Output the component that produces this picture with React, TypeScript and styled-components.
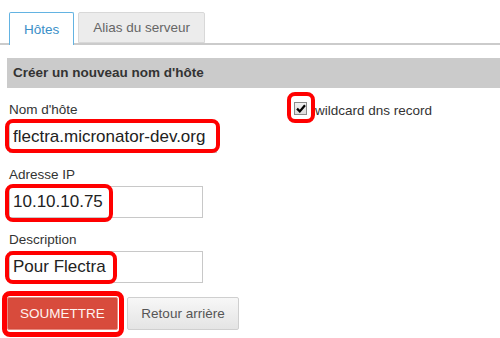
import React from 'react';
import styled, { createGlobalStyle } from 'styled-components';

const GlobalStyle = createGlobalStyle`
  body {
    margin: 0;
    background: #fff;
    font-family: 'Liberation Sans', Arial, sans-serif;
    color: #333;
  }
`;

const Page = styled.div`
  position: relative;
  width: 500px;
  height: 338px;
  overflow: hidden;
`;

const TabBar = styled.div`
  display: flex;
  gap: 4px;
  padding: 12px 0 0 9px;
  border-bottom: 2px solid #cbcbcb;
  height: 31px;
`;

const Tab = styled.div<{ $active?: boolean }>`
  box-sizing: border-box;
  height: ${p => (p.$active ? '33px' : '31px')};
  padding: 0 14px;
  display: flex;
  align-items: center;
  font-size: 13.5px;
  border: 1px solid ${p => (p.$active ? '#63b3e2' : '#d8d8d8')};
  border-bottom: ${p => (p.$active ? 'none' : '1px solid #d8d8d8')};
  border-radius: 2px 2px 0 0;
  background: ${p => (p.$active ? '#fff' : '#ececec')};
  color: ${p => (p.$active ? '#3b8fc8' : '#666')};
`;

const SectionTitle = styled.div`
  margin: 13px 0 0 7px;
  height: 30px;
  line-height: 30px;
  padding-left: 6px;
  background: #cbcbcb;
  font-size: 13.5px;
  font-weight: bold;
  color: #333;
`;

const Form = styled.div`
  padding-left: 9px;
`;

const TopRow = styled.div`
  display: grid;
  grid-template-columns: 285px auto;
`;

const Field = styled.div`
  display: flex;
  flex-direction: column;
  align-items: flex-start;
`;

const Label = styled.label`
  margin-top: 14px;
  height: 16px;
  line-height: 16px;
  margin-bottom: 3px;
  font-size: 13.5px;
  color: #333;
`;

const Input = styled.input<{ $width?: number }>`
  box-sizing: border-box;
  width: ${p => p.$width ?? 194}px;
  height: 32px;
  border: 1px solid #c8c8c8;
  padding: 0 3px;
  font-family: 'Liberation Sans', Arial, sans-serif;
  font-size: 17px;
  color: #222;
  background: #fff;
  outline: none;
`;

const CheckField = styled.label`
  display: flex;
  align-items: center;
  gap: 8px;
  margin-top: 14px;
  height: 16px;
  font-size: 13.5px;
  color: #333;
`;

const CheckBox = styled.span`
  box-sizing: border-box;
  width: 13px;
  height: 13px;
  border: 1px solid #8a8a8a;
  background: linear-gradient(#f2f2f2, #dcdcdc);
  display: flex;
  align-items: center;
  justify-content: center;
  margin-top: -3px;
`;

const Actions = styled.div`
  display: flex;
  gap: 9px;
  margin: 14px 0 0 -2px;
`;

const Button = styled.button<{ $primary?: boolean }>`
  box-sizing: border-box;
  height: 33px;
  padding: 0;
  white-space: nowrap;
  font-family: 'Liberation Sans', Arial, sans-serif;
  font-size: 13.5px;
  border-radius: 2px;
  border: 1px solid ${p => (p.$primary ? '#e88b80' : '#cfcfcf')};
  box-shadow: ${p => (p.$primary ? 'inset 0 0 0 1px #d4493a' : 'none')};
  background: ${p => (p.$primary ? '#d84b3c' : 'linear-gradient(#f7f7f7, #e4e4e4)')};
  color: ${p => (p.$primary ? '#fff3f0' : '#555')};
  width: ${p => (p.$primary ? '111px' : '112px')};
`;

const Highlight = styled.div<{ $x: number; $y: number; $w: number; $h: number; $t?: number }>`
  position: absolute;
  box-sizing: border-box;
  left: ${p => p.$x}px;
  top: ${p => p.$y}px;
  width: ${p => p.$w}px;
  height: ${p => p.$h}px;
  border: ${p => p.$t ?? 4}px solid #f00;
  border-radius: 8px;
  pointer-events: none;
`;

const App = () => {
  return (
    <>
      <GlobalStyle />
      <Page>
        <TabBar>
          <Tab $active>Hôtes</Tab>
          <Tab>Alias du serveur</Tab>
        </TabBar>
        <SectionTitle>Créer un nouveau nom d'hôte</SectionTitle>
        <Form>
          <TopRow>
            <Field>
              <Label>Nom d'hôte</Label>
              <Input $width={208} value="flectra.micronator-dev.org" readOnly />
            </Field>
            <CheckField>
              <CheckBox>
                <svg width="10" height="9" viewBox="0 0 10 9">
                  <path d="M1 4.6 L3.8 7.4 L9 1.2" fill="none" stroke="#000" strokeWidth="2.2" />
                </svg>
              </CheckBox>
              wildcard dns record
            </CheckField>
          </TopRow>
          <Field>
            <Label>Adresse IP</Label>
            <Input value="10.10.10.75" readOnly />
          </Field>
          <Field>
            <Label>Description</Label>
            <Input value="Pour Flectra" readOnly />
          </Field>
          <Actions>
            <Button $primary>SOUMETTRE</Button>
            <Button>Retour arrière</Button>
          </Actions>
        </Form>

        <Highlight $x={5} $y={119} $w={215} $h={34} />
        <Highlight $x={287} $y={92} $w={28} $h={31} />
        <Highlight $x={5} $y={184} $w={108} $h={38} />
        <Highlight $x={5} $y={251} $w={112} $h={33} />
        <Highlight $x={2} $y={291} $w={122} $h={46} $t={5} />
      </Page>
    </>
  );
};

export default App;
